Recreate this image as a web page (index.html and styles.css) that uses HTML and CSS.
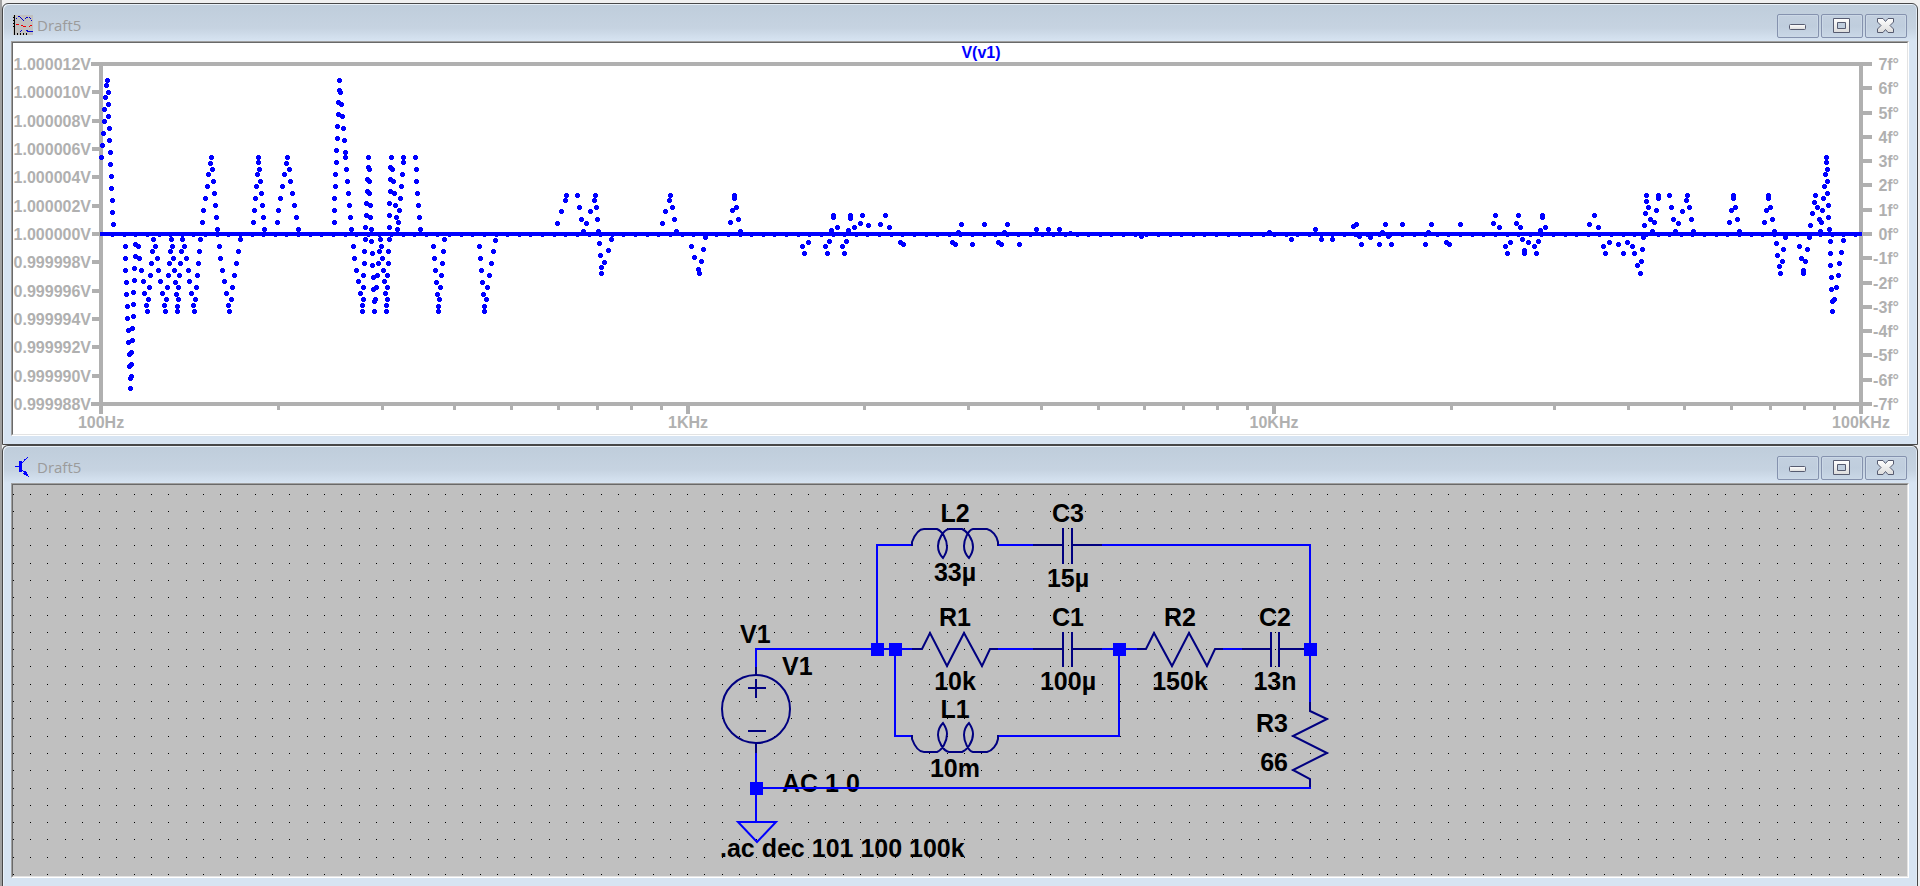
FILE: index.html
```html
<!DOCTYPE html>
<html lang="en">
<head>
<meta charset="utf-8">
<title>Draft5</title>
<link rel="stylesheet" href="styles.css">
</head>
<body>
<main class="workspace">

  <section class="window" aria-labelledby="plot-title">
    <header class="titlebar">
      <svg class="titlebar-icon" viewBox="0 0 20 20" aria-hidden="true">
        <rect width="20" height="20" fill="#c0c0c0"/>
        <path d="M0 2h1v1h-1zM0 5h1v1h-1zM0 8h1v1h-1zM0 11h1v1h-1zM1 0h1v20h-1zM4 18h1v2h-1zM7 18h1v2h-1zM10 18h1v2h-1zM13 18h1v2h-1z" fill="#000"/>
        <path d="M3 3h1v1h-1zM5 1h2v1h-2zM7 2h1v1h-1zM8 3h1v1h-1zM9 4h1v1h-1zM10 5h1v1h-1zM12 3h1v1h-1zM13 2h2v1h-2zM16 2h1v1h-1zM17 3h1v1h-1zM18 5h1v1h-1zM8 15h1v1h-1zM7 16h1v1h-1zM13 15h2v1h-2zM14 16h6v1h-6z" fill="#00c"/>
        <path d="M3 9h3v1h-3zM8 10h2v1h-2zM10 11h3v1h-3zM16 11h1v1h-1zM17 10h2v1h-2z" fill="#e00"/>
      </svg>
      <h1 class="titlebar-text" id="plot-title">Draft5</h1>
      <div class="titlebar-buttons">
        <button class="tool-button" type="button" aria-label="Minimize"><svg class="glyph" viewBox="1 1 20 18"><use href="#glyph-min"/></svg></button>
        <button class="tool-button" type="button" aria-label="Maximize"><svg class="glyph" viewBox="1 1 20 18"><use href="#glyph-max"/></svg></button>
        <button class="tool-button" type="button" aria-label="Close"><svg class="glyph" viewBox="1 1 20 18"><use href="#glyph-close"/></svg></button>
      </div>
    </header>
    <div class="client client-plot">
      <svg class="canvas" viewBox="13 43 1894 391" role="img" aria-label="V(v1) frequency response">
        <g class="axes">
          <path d="M101 414V64M1861 414V64M91 64H1872M91 404H1872"/>
          <path d="M92 92h9M92 121h9M92 149h9M92 177h9M92 206h9M92 234h9M92 262h9M92 291h9M92 319h9M92 347h9M92 376h9"/>
          <path d="M1861 88h11M1861 113h11M1861 137h11M1861 161h11M1861 185h11M1861 210h11M1861 234h11M1861 258h11M1861 283h11M1861 307h11M1861 331h11M1861 355h11M1861 380h11"/>
          <path d="M688 404v10M1274 404v10"/>
          <path class="minor" d="M278 404v6M382 404v6M454 404v6M511 404v6M558 404v6M597 404v6M631 404v6M661 404v6M864 404v6M968 404v6M1041 404v6M1098 404v6M1144 404v6M1183 404v6M1217 404v6M1247 404v6M1451 404v6M1554 404v6M1628 404v6M1684 404v6M1731 404v6M1770 404v6M1804 404v6M1834 404v6"/>
        </g>
        <g class="axis-label axis-label-end">
          <text x="91" y="70">1.000012V</text>
          <text x="91" y="98">1.000010V</text>
          <text x="91" y="127">1.000008V</text>
          <text x="91" y="155">1.000006V</text>
          <text x="91" y="183">1.000004V</text>
          <text x="91" y="212">1.000002V</text>
          <text x="91" y="240">1.000000V</text>
          <text x="91" y="268">0.999998V</text>
          <text x="91" y="297">0.999996V</text>
          <text x="91" y="325">0.999994V</text>
          <text x="91" y="353">0.999992V</text>
          <text x="91" y="382">0.999990V</text>
          <text x="91" y="410">0.999988V</text>
        </g>
        <g class="axis-label axis-label-end">
          <text x="1899" y="70">7f°</text>
          <text x="1899" y="94">6f°</text>
          <text x="1899" y="119">5f°</text>
          <text x="1899" y="143">4f°</text>
          <text x="1899" y="167">3f°</text>
          <text x="1899" y="191">2f°</text>
          <text x="1899" y="216">1f°</text>
          <text x="1899" y="240">0f°</text>
          <text x="1899" y="264">-1f°</text>
          <text x="1899" y="289">-2f°</text>
          <text x="1899" y="313">-3f°</text>
          <text x="1899" y="337">-4f°</text>
          <text x="1899" y="361">-5f°</text>
          <text x="1899" y="386">-6f°</text>
          <text x="1899" y="410">-7f°</text>
        </g>
        <g class="axis-label axis-label-middle">
          <text x="101" y="428">100Hz</text>
          <text x="688" y="428">1KHz</text>
          <text x="1274" y="428">10KHz</text>
          <text x="1861" y="428">100KHz</text>
        </g>
        <text class="trace-label" x="981" y="58">V(v1)</text>
        <path class="trace" d="M100 234H1862"/>
        <path class="phase" id="phase"/>
      </svg>
    </div>
  </section>

  <section class="window window-last" aria-labelledby="schematic-title">
    <header class="titlebar">
      <svg class="titlebar-icon" viewBox="0 0 20 20" aria-hidden="true">
        <path d="M2 9h4v1h-4zM6 4h3v11h-3zM9 5h1v1h-1zM10 4h1v1h-1zM11 2h1v2h-1zM12 2h1v1h-1zM13 1h1v1h-1zM14 0h1v1h-1zM9 13h1v1h-1zM10 14h3v1h-3zM11 15h3v3h-3zM10 16h1v1h-1zM13 17h2v2h-2zM15 19h1v1h-1z" fill="#00f"/>
      </svg>
      <h1 class="titlebar-text" id="schematic-title">Draft5</h1>
      <div class="titlebar-buttons">
        <button class="tool-button" type="button" aria-label="Minimize"><svg class="glyph" viewBox="1 1 20 18"><use href="#glyph-min"/></svg></button>
        <button class="tool-button" type="button" aria-label="Maximize"><svg class="glyph" viewBox="1 1 20 18"><use href="#glyph-max"/></svg></button>
        <button class="tool-button" type="button" aria-label="Close"><svg class="glyph" viewBox="1 1 20 18"><use href="#glyph-close"/></svg></button>
      </div>
    </header>
    <div class="client client-schematic">
      <svg class="canvas" viewBox="13 485 1894 391" role="img" aria-label="Circuit schematic">
        <defs>
          <path id="coil" d="M912 546V542C915 534 919 529 924 529H937C942 531 947 539 947 547C947 552 945 555 943 558C940 555 938 551 938 546C938 540 943 530 949 529H962C967 531 973 539 973 547C973 552 971 555 969 558C966 555 964 551 964 546C964 540 968 530 973 529H987C992 530 997 536 998 542V546"/>
        </defs>
        <path class="grid" id="grid"/>
        <g class="schematic-text">
          <g class="schematic-text-middle">
            <text x="955" y="522">L2</text>
            <text x="955" y="581">33µ</text>
            <text x="1068" y="522">C3</text>
            <text x="1068" y="587">15µ</text>
            <text x="955" y="626">R1</text>
            <text x="955" y="690">10k</text>
            <text x="1068" y="626">C1</text>
            <text x="1068" y="690">100µ</text>
            <text x="1180" y="626">R2</text>
            <text x="1180" y="690">150k</text>
            <text x="1275" y="626">C2</text>
            <text x="1275" y="690">13n</text>
            <text x="955" y="718">L1</text>
            <text x="955" y="777">10m</text>
          </g>
          <g class="schematic-text-end">
            <text x="1288" y="732">R3</text>
            <text x="1288" y="771">66</text>
          </g>
          <text x="740" y="643">V1</text>
          <text x="782" y="675">V1</text>
          <text x="782" y="792">AC 1 0</text>
          <text x="720" y="857">.ac dec 101 100 100k</text>
        </g>
        <g class="wire">
          <path d="M756 668V649H912M877 649V545H912M998 545H1034M1101 545H1310V702"/>
          <path d="M998 649H1034M1101 649H1138M1222 649H1242M895 649V736H912M998 736H1119V649"/>
          <path d="M756 752V822M756 788H1311"/>
          <path class="smooth" d="M738 822H776L757 842Z"/>
        </g>
        <g class="part">
          <path d="M756 667V676M756 743V753M748 688H766M756 679V698M748 731H766"/>
          <path d="M1033 545H1063M1063 528V564M1072 528V564M1072 545H1102"/>
          <path d="M1033 649H1063M1063 632V667M1072 632V667M1072 649H1102"/>
          <path d="M1242 649H1271M1271 632V667M1279 632V667M1279 649H1305"/>
          <circle class="smooth" cx="756" cy="709" r="34"/>
          <use class="smooth" href="#coil"/>
          <use class="smooth" href="#coil" transform="matrix(1 0 0 -1 0 1281)"/>
          <path class="smooth" d="M912 649H922L930 633L947 666L964 633L982 666L990 649H998"/>
          <path class="smooth" d="M1137 649H1146L1154 633L1172 666L1189 633L1207 666L1215 649H1223"/>
          <path class="smooth" d="M1310 702V711L1327 719L1293 736L1327 753L1293 770L1310 779V787"/>
        </g>
        <path class="joint" d="M871 643h13v13h-13zM889 643h13v13h-13zM1113 643h13v13h-13zM1304 643h13v13h-13zM750 782h13v13h-13z"/>
      </svg>
    </div>
  </section>
</main>

<svg class="sprite" aria-hidden="true">
  <defs>
    <linearGradient id="glyph-fill" x1="0" y1="0" x2="0" y2="1">
      <stop offset="0" stop-color="#fff"/>
      <stop offset="1" stop-color="#dcdcdc"/>
    </linearGradient>
    <g id="glyph-min">
      <rect class="glyph-shape" x="2.500" y="8.500" width="16" height="5" rx="1"/>
    </g>
    <g id="glyph-max">
      <path class="glyph-shape" fill-rule="evenodd" d="M2.500 2.500h16v14h-16zM6.500 6.500v6h8v-6z"/>
    </g>
    <g id="glyph-close">
      <path class="glyph-shape" d="M2.500 2.500H8L10.500 5.500L13 2.500H18.500V6L15 9.500L18.500 13V16.500H13L10.500 13.500L8 16.500H2.500V13L6 9.500L2.500 6Z"/>
    </g>
  </defs>
</svg>
<script src="plot.js"></script>
</body>
</html>
```

FILE: styles.css
```css
* {
  box-sizing: border-box;
}

body {
  margin: 0;
  background: #f0f0f0;
  font-family: "Liberation Sans", Arial, sans-serif;
}

.workspace {
  display: flex;
  flex-direction: column;
  padding: 3px 2px 0 0;
  border-left: 2px solid #a0a0a0;
}

.window {
  display: flex;
  flex-direction: column;
  padding: 0 8px 8px;
  background: #d7e4f2;
  background-image: linear-gradient(#bfcddb, #c6d3e1 24px, #d7e4f2 37px);
  border: 1px solid #484848;
  border-radius: 6px 6px 0 0;
  box-shadow: inset 1px 1px 0 #e9f1f9, inset -1px 0 0 #e0eaf4;
}

.window-last {
  border-bottom: 0;
}

.titlebar {
  display: flex;
  align-items: center;
  height: 37px;
  padding: 4px 2px 0;
}

.titlebar-icon {
  width: 20px;
  height: 20px;
  shape-rendering: crispEdges;
}

.titlebar-text {
  flex: 1;
  margin: 0 0 0 4px;
  color: #9b9b9b;
  font: 400 15px/20px "Open Sans", "Noto Sans", sans-serif;
}

.titlebar-buttons {
  display: flex;
  gap: 2px;
  padding-top: 3px;
}

.tool-button {
  display: grid;
  place-items: center;
  width: 42px;
  height: 24px;
  padding: 0;
  background: linear-gradient(#c3d0df, #bfcddd 50%, #c9d7e6);
  border: 1px solid #8592ae;
  border-radius: 2px;
  box-shadow: inset 0 0 0 1px #cbd8e6;
}

.glyph {
  width: 20px;
  height: 18px;
}

.glyph-shape {
  fill: url(#glyph-fill);
  stroke: #565b70;
  stroke-linejoin: round;
}

.sprite {
  position: absolute;
  width: 0;
  height: 0;
}

.client {
  border: 1px solid;
  border-color: #a0a0a0 #fff #fff #a0a0a0;
}

.canvas {
  display: block;
  width: 100%;
  border: 1px solid;
  border-color: #696969 #e3e3e3 #e3e3e3 #696969;
}

.client-plot {
  background: #fff;
}

.client-schematic {
  background: #c0c0c0;
}

.axes {
  fill: none;
  stroke: #b0b0b0;
  stroke-width: 4px;
  shape-rendering: crispEdges;
}

.axes .minor {
  stroke-width: 3px;
}

.axis-label {
  fill: #b0b0b0;
  font-size: 16px;
  font-weight: 700;
}

.axis-label-end {
  text-anchor: end;
}

.axis-label-middle {
  text-anchor: middle;
}

.trace-label {
  fill: #00f;
  font-size: 16px;
  font-weight: 700;
  text-anchor: middle;
}

.trace {
  stroke: #00f;
  stroke-width: 4px;
  shape-rendering: crispEdges;
}

.phase {
  fill: #00f;
  shape-rendering: crispEdges;
}

.grid {
  stroke: #000;
  stroke-width: 1px;
  shape-rendering: crispEdges;
}

.wire,
.part {
  fill: none;
  stroke: #00f;
  stroke-width: 2px;
  shape-rendering: crispEdges;
}

.part {
  stroke: #000080;
}

.smooth {
  shape-rendering: auto;
}

.joint {
  fill: #00f;
  shape-rendering: crispEdges;
}

.schematic-text {
  fill: #000;
  font-size: 25px;
  font-weight: 700;
}

.schematic-text-middle {
  text-anchor: middle;
}

.schematic-text-end {
  text-anchor: end;
}
```

FILE: plot.js
```javascript
// Phase samples of V(v1). Each run is [x1, y1, x2, y2, count], or [x, y] for a
// single sample, in thirds of a canvas unit and relative to its block's origin.
const UNITS = 3;
const blocks = [
  { x: 0, y: 0, runs: [
    [304,472,320,257,7],[322,241],[324,277,339,673,12],
    [375,739,390,1135,12],[391,1165],[393,1129,407,734,12],
    [414,739,440,917,6],[443,934],[445,898,460,718,6],
    [466,739,493,917,6],[496,934],[499,898,513,718,6],
    [517,739,531,918,6],[532,934],[534,898,546,718,6],
    [553,739,581,917,6],[584,934],[586,898,600,718,6],
    [606,667,632,489,6],[634,472],[637,508,651,688,6],
    [657,739,686,917,6],[689,934],[693,898,720,719,6],
    [760,667,774,487,6],[775,472],[778,508,792,688,6],
    [831,667,860,489,6],[862,472],[867,508,894,687,6],
    [1002,667,1017,271,12],[1018,241],[1020,277,1035,457,6],[1037,472],[1039,508,1053,688,6],
    [1059,739,1086,917,6],[1088,934],[1089,898,1096,718,6],[1097,682,1104,502,6],
    [1105,472],[1107,508,1114,688,6],[1115,724,1122,904,6],[1124,934],[1125,898,1140,718,6],
    [1143,739,1158,917,6],[1159,934],[1161,898,1167,718,6],[1167,682,1172,502,6],
    [1174,472],[1177,508,1191,688,6],[1194,667,1209,487,6],[1210,472],
    [1246,472],[1248,508,1260,688,6],
    [1299,739,1314,919,6],[1315,934],[1317,898,1332,718,6],
    [1439,739,1452,919,6],[1453,934],[1458,898,1487,720,6]
  ] },
  { x: 1440, y: 120, runs: [
    [232,549,256,481,3],[259,466],[292,466],[297,502,309,574,3],
    [320,549,342,481,3],[346,466],[348,502,354,574,3],[357,610,363,682,3],[364,700],[374,666,394,597,3],
    [547,549,567,481,3],[571,466],[576,502,588,574,3],
    [634,618,655,688,3],[658,700],[663,664,675,593,3],
    [750,548,762,475,3],[763,466],[768,502,780,574,3],
    [966,618],[973,640],[985,606],[1035,618],[1042,640],[1048,605],[1054,570],[1060,533],[1060,526],[1072,561],
    [1088,618],[1093,640],[1099,605],[1105,570],[1110,534],[1111,526],[1123,561],[1141,549],[1147,526],
    [1166,557],[1201,552],[1217,526],[1228,561],[1262,606],[1270,613],[1418,606],[1426,613],[1436,578]
  ] },
  { x: 2880, y: 120, runs: [
    [4,553],[37,613],[73,553],[116,607],[124,613],[134,577],[142,553],[178,613],[229,569],[265,569],[298,569],
    [331,580],[543,590],[928,576],[995,598],[1065,569],[1084,598],[1117,598],[1180,560],[1189,553],[1198,590],
    [1204,613],[1232,592],[1258,613],[1267,577],[1276,553],[1286,590],[1294,613],[1327,553],[1396,613],[1405,577],[1414,553]
  ] },
  { x: 4320, y: 0, runs: [
    [20,727],[28,733],[61,673],[159,669],[166,646],[178,681],[196,738],[202,760],[211,726],[229,669],[235,646],
    [241,682],[247,717],[252,752],[253,760],[265,726],[283,738],[289,760],[295,724],[301,690],[306,653],[307,646],
    [317,681],[447,673],[463,646],[475,681],[490,738],[496,760],[508,726],[534,734],[550,760],[562,726],[577,738],
    [584,760],[592,795],[601,820],[603,785],[607,748],[610,713],[613,677],[615,641],[618,604],[619,586],
    [625,622],[630,658],[636,693],[642,667],[648,631],[654,595],[655,586],[688,586],[694,622],[699,658],[705,693],
    [715,669],[727,635],[738,601],[742,586],[747,622],[753,658],[759,693],
    [867,667],[873,631],[879,595],[880,586],[886,622],[891,658],[897,693],
    [972,667],[978,631],[984,596],[985,586],[990,622],[996,658],[1003,693],[1008,729],[1012,765],[1018,799],[1021,820],
    [1026,785],[1031,749],[1035,712],[1077,739],[1083,775],[1089,811],[1090,820],[1095,785],[1101,749],[1107,712],
    [1112,677],[1118,641],[1123,606],[1126,586],[1131,622],[1137,658],[1141,693],
    [1144,667],[1147,631],[1150,596],[1153,560],[1155,524],[1158,487],[1159,472],
    [1161,508,1168,688,6],[1170,724,1176,904,6],[1177,934],[1183,898,1211,721,6]
  ] }
];

// A five-unit round marker with its corners cut.
const marker = (x, y) => `M${x - 1} ${y - 2}h3v1h1v3h-1v1h-3v-1h-1v-3h1z`;

let dots = "";
for (const block of blocks) {
  for (const [x1, y1, x2 = x1, y2 = y1, count = 1] of block.runs) {
    for (let i = 0; i < count; i++) {
      const t = count > 1 ? i / (count - 1) : 0;
      const x = Math.floor((block.x + x1 + (x2 - x1) * t) / UNITS);
      const y = Math.floor((block.y + y1 + (y2 - y1) * t) / UNITS);
      dots += marker(x, y);
    }
  }
}

// Samples that rest on the zero line.
const ZERO_LINE = 234;
const SAMPLE_PITCH = 11.62;
for (let i = 1; 101 + i * SAMPLE_PITCH < 1860; i++) {
  dots += marker(Math.floor(101 + i * SAMPLE_PITCH), ZERO_LINE);
}
document.getElementById("phase").setAttribute("d", dots);

// Snap grid of the schematic sheet.
const PITCH = 17.295;
let grid = "";
for (let row = 0; row < 23; row++) {
  const y = Math.floor(494 + row * PITCH) + 0.5;
  for (let col = 0; col < 110; col++) {
    grid += `M${Math.floor(13.12 + col * PITCH)} ${y}h1`;
  }
}
document.getElementById("grid").setAttribute("d", grid);
```
